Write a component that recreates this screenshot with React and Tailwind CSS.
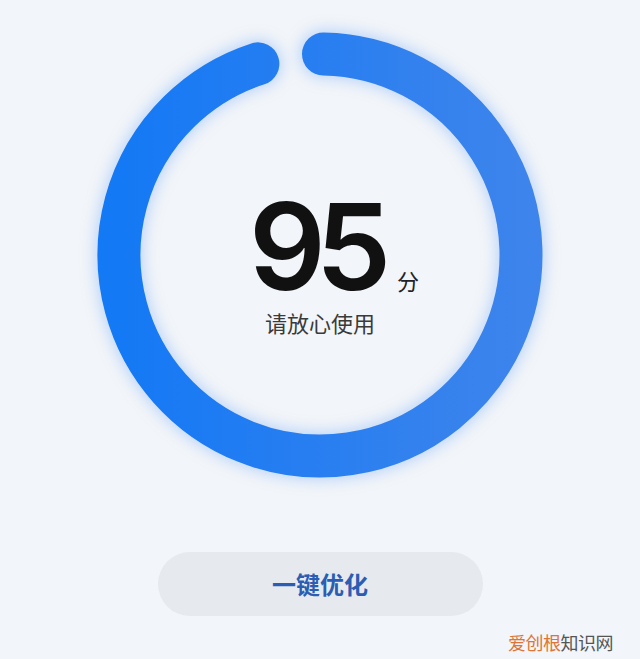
import React from "react";

function Ring() {
  const cx = 230, cy = 230, r = 201;
  const pt = (deg) => {
    const a = (deg * Math.PI) / 180;
    return [cx + r * Math.sin(a), cy - r * Math.cos(a)];
  };
  const [sx, sy] = pt(1);
  const [ex, ey] = pt(342);
  const d = `M ${sx} ${sy} A ${r} ${r} 0 1 1 ${ex} ${ey}`;
  return (
    <svg className="absolute inset-0 overflow-visible" width="460" height="460" viewBox="0 0 460 460">
      <defs>
        <linearGradient id="rg" x1="0" y1="0" x2="1" y2="0">
          <stop offset="0" stopColor="#1479f5" />
          <stop offset="1" stopColor="#3d84ec" />
        </linearGradient>
        <filter id="glow" filterUnits="userSpaceOnUse" x="-60" y="-60" width="580" height="580">
          <feGaussianBlur stdDeviation="7" />
        </filter>
      </defs>
      <path d={d} fill="none" stroke="#8fbaf7" strokeOpacity="0.5" strokeWidth="50" strokeLinecap="round" filter="url(#glow)" />
      <path d={d} fill="none" stroke="url(#rg)" strokeWidth="43" strokeLinecap="round" />
    </svg>
  );
}

export default function App() {
  return (
    <div
      className="w-full h-[659px] bg-[#f2f5f9] flex flex-col items-center pt-[25px] overflow-hidden"
      style={{ fontFamily: '"Noto Sans CJK SC", "Noto Sans", sans-serif' }}
    >
      <div className="relative w-[460px] h-[460px] shrink-0">
        <Ring />
        <div className="relative flex flex-col items-center pt-[172px]">
          <div className="relative h-[102px] flex items-start">
            <span
              className="block text-[120px] leading-[100px] font-semibold text-[#111] tracking-[-10px] pr-[10px]"
              style={{ fontFamily: 'Inter, "Noto Sans", sans-serif' }}
            >
              95
            </span>
            <span className="absolute left-full top-[72px] ml-[6px] text-[22px] leading-none text-[#222]">
              分
            </span>
          </div>
          <div className="mt-[8px] text-[22px] leading-[30px] text-[#3a3a3a]">请放心使用</div>
        </div>
      </div>
      <button className="mt-[67px] w-[325px] h-[64px] rounded-full bg-[#e6e9ee] flex items-center justify-center text-[24px] font-bold text-[#2a5db3]">
        一键优化
      </button>
      <div className="self-end mr-[27px] mt-[17px] text-[18px] leading-[18px] tracking-[-0.5px]">
        <span className="text-[#e07436]">爱创根</span>
        <span className="text-[#555]">知识网</span>
      </div>
    </div>
  );
}
